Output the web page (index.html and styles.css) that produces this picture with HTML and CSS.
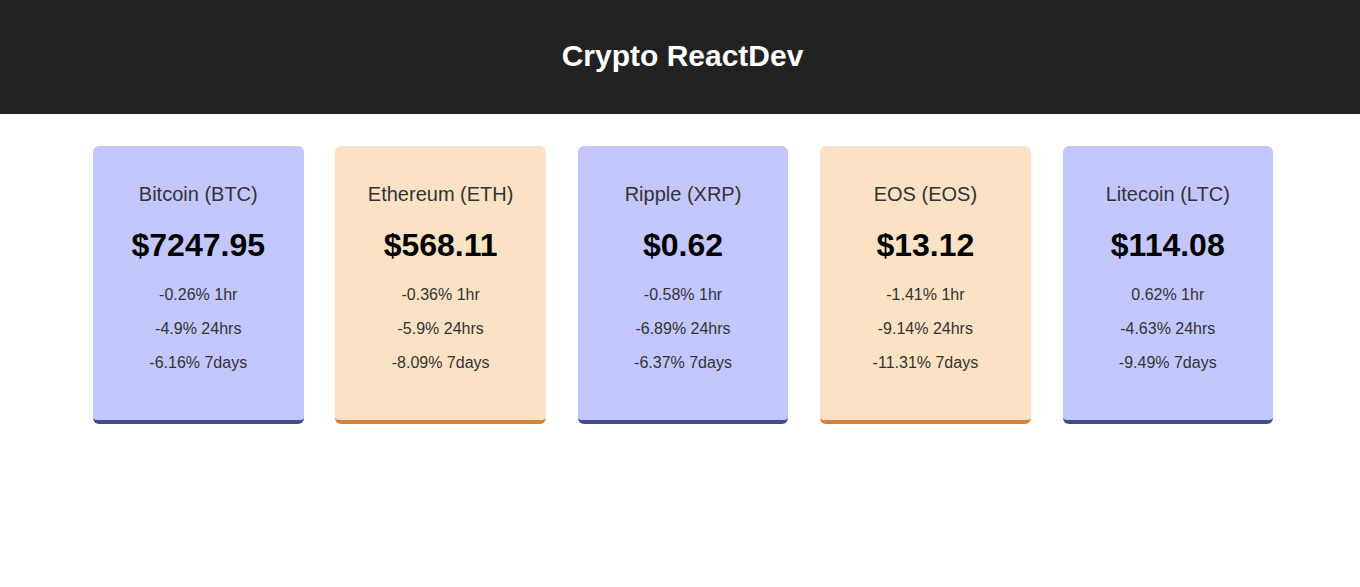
FILE: index.html
```html
<!DOCTYPE html>
<html lang="en">
<head>
<meta charset="utf-8">
<title>Crypto ReactDev</title>
<link rel="stylesheet" href="styles.css">
</head>
<body>
<header class="topbar">
  <h1 class="title">Crypto ReactDev</h1>
</header>
<main class="cards">
  <section class="card card-blue">
    <h3 class="name">Bitcoin (BTC)</h3>
    <h2 class="price">$7247.95</h2>
    <p class="change">-0.26% 1hr</p>
    <p class="change">-4.9% 24hrs</p>
    <p class="change">-6.16% 7days</p>
  </section>
  <section class="card card-orange">
    <h3 class="name">Ethereum (ETH)</h3>
    <h2 class="price">$568.11</h2>
    <p class="change">-0.36% 1hr</p>
    <p class="change">-5.9% 24hrs</p>
    <p class="change">-8.09% 7days</p>
  </section>
  <section class="card card-blue">
    <h3 class="name">Ripple (XRP)</h3>
    <h2 class="price">$0.62</h2>
    <p class="change">-0.58% 1hr</p>
    <p class="change">-6.89% 24hrs</p>
    <p class="change">-6.37% 7days</p>
  </section>
  <section class="card card-orange">
    <h3 class="name">EOS (EOS)</h3>
    <h2 class="price">$13.12</h2>
    <p class="change">-1.41% 1hr</p>
    <p class="change">-9.14% 24hrs</p>
    <p class="change">-11.31% 7days</p>
  </section>
  <section class="card card-blue">
    <h3 class="name">Litecoin (LTC)</h3>
    <h2 class="price">$114.08</h2>
    <p class="change">0.62% 1hr</p>
    <p class="change">-4.63% 24hrs</p>
    <p class="change">-9.49% 7days</p>
  </section>
</main>
</body>
</html>
```

FILE: styles.css
```css
* { box-sizing: border-box; }

html, body {
  margin: 0;
  padding: 0;
  background: #ffffff;
  font-family: "Liberation Sans", Arial, sans-serif;
}

.topbar {
  height: 114px;
  background: #222222;
  display: flex;
  align-items: center;
  justify-content: center;
  padding-left: 5px;
}

.title {
  margin: 0;
  color: #ffffff;
  font-size: 30px;
  font-weight: bold;
  line-height: 36px;
  padding-bottom: 2px;
}

.cards {
  width: 1180px;
  margin: 32px 87px 0 93px;
  display: flex;
  justify-content: space-between;
}

.card {
  width: 210.5px;
  height: 278px;
  border-radius: 6px;
  border-bottom: 4px solid;
  padding-top: 36px;
  text-align: center;
  color: #333333;
}

.card-blue {
  background: #c3c7fd;
  border-bottom-color: #3f5089;
}

.card-orange {
  background: #fbe2c4;
  border-bottom-color: #d1843a;
}

.name {
  margin: 0;
  font-size: 20px;
  font-weight: normal;
  line-height: 24px;
}

.price {
  margin: 21px 0 22px;
  font-size: 32px;
  font-weight: bold;
  line-height: 36px;
  color: #000000;
}

.change {
  margin: 0 0 14px;
  font-size: 16px;
  line-height: 20px;
}
```
